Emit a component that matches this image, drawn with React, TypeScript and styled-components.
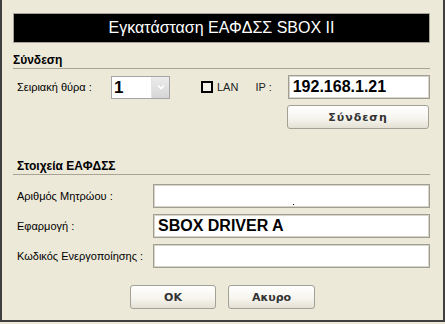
import React from 'react';
import styled, { createGlobalStyle } from 'styled-components';

const GlobalStyle = createGlobalStyle`
  html, body {
    margin: 0;
    padding: 0;
    background: #ece9d8;
  }
  * {
    box-sizing: border-box;
  }
`;

const Dialog = styled.div`
  width: 445px;
  height: 322px;
  background: #ece9d8;
  border-left: 2px solid #3f3f3f;
  border-right: 2px solid #3f3f3f;
  border-bottom: 2px solid #3f3f3f;
  padding: 13px 13px 0 11px;
  display: flex;
  flex-direction: column;
  font-family: 'Liberation Sans', Arial, sans-serif;
  font-size: 11px;
  color: #000;
`;

const TitleBar = styled.div`
  height: 30px;
  background: #000;
  border: 1px solid #a7a497;
  color: #fff;
  font-size: 16px;
  display: flex;
  align-items: center;
  justify-content: center;
`;

const SectionHeader = styled.div<{ $top: number; $indent: number }>`
  margin-top: ${(p) => p.$top}px;
  padding: 0 0 1px ${(p) => p.$indent}px;
  border-bottom: 1px solid #a7a497;
  font-weight: bold;
  font-size: 12px;
  line-height: 14px;
`;

const Row = styled.div<{ $top: number }>`
  display: flex;
  align-items: center;
  margin-top: ${(p) => p.$top}px;
`;

const Label = styled.span<{ $width: number }>`
  width: ${(p) => p.$width}px;
  padding-left: 4px;
  flex-shrink: 0;
`;

const Combo = styled.div`
  width: 59px;
  height: 23px;
  border: 1px solid #a5a5a5;
  background: #fff;
  display: flex;
`;

const ComboText = styled.span`
  flex: 1;
  font-size: 17px;
  font-weight: bold;
  line-height: 21px;
  padding-left: 2px;
`;

const ComboButton = styled.span`
  width: 18px;
  background: linear-gradient(#ececec, #d6d6d6);
  border-left: 1px solid #e4e4e4;
  display: flex;
  align-items: center;
  justify-content: center;
`;

const CheckBox = styled.span`
  width: 12px;
  height: 12px;
  border: 2px solid #000;
  margin-left: 31px;
  background: #f4f2e8;
`;

const SmallText = styled.span<{ $left: number }>`
  margin-left: ${(p) => p.$left}px;
  color: #222;
`;

const TextBox = styled.div<{ $width?: number }>`
  height: 24px;
  ${(p) => (p.$width ? `width: ${p.$width}px;` : 'flex: 1;')}
  background: #fff;
  border: 1px solid #a09e94;
  box-shadow: inset 0 0 0 1px #d8d5c8;
  font-size: 16px;
  font-weight: bold;
  line-height: 22px;
  padding-left: 4px;
  position: relative;
`;

const Dot = styled.span`
  position: absolute;
  left: 139px;
  top: 19px;
  width: 1px;
  height: 1px;
  background: #000;
`;

const PushButton = styled.button<{ $width: number }>`
  width: ${(p) => p.$width}px;
  height: 24px;
  border: 1px solid #a3a196;
  border-radius: 3px;
  background: linear-gradient(#ffffff 0%, #f6f5ef 55%, #e4e1d4 100%);
  font-family: 'DejaVu Sans', Verdana, sans-serif;
  font-weight: bold;
  font-size: 11px;
  color: #333;
  padding: 0;
`;

const ConnectRow = styled.div`
  display: flex;
  justify-content: flex-end;
  margin-top: 6px;
  padding-right: 1px;
`;

const Footer = styled.div`
  display: flex;
  justify-content: center;
  gap: 12px;
  margin-top: 17px;
  padding-left: 2px;
`;

const Chevron = () => (
  <svg width="8" height="6" viewBox="0 0 8 6">
    <path d="M1 1.5 L4 4.5 L7 1.5" fill="none" stroke="#ffffff" strokeWidth="1.6" />
  </svg>
);

export default function App() {
  return (
    <>
      <GlobalStyle />
      <Dialog>
        <TitleBar>Εγκατάσταση ΕΑΦΔΣΣ SBOX II</TitleBar>

        <SectionHeader $top={10} $indent={0}>Σύνδεση</SectionHeader>
        <Row $top={6}>
          <Label $width={98}>Σειριακή θύρα :</Label>
          <Combo>
            <ComboText>1</ComboText>
            <ComboButton>
              <Chevron />
            </ComboButton>
          </Combo>
          <CheckBox />
          <SmallText $left={4}>LAN</SmallText>
          <SmallText $left={17}>IP :</SmallText>
          <TextBox $width={142} style={{ marginLeft: 16 }}>192.168.1.21</TextBox>
        </Row>
        <ConnectRow>
          <PushButton $width={142} style={{ letterSpacing: '1px' }}>Σύνδεση</PushButton>
        </ConnectRow>

        <SectionHeader $top={30} $indent={4}>Στοιχεία ΕΑΦΔΣΣ</SectionHeader>
        <Row $top={9}>
          <Label $width={140}>Αριθμός Μητρώου :</Label>
          <TextBox>
            <Dot />
          </TextBox>
        </Row>
        <Row $top={6}>
          <Label $width={140}>Εφαρμογή :</Label>
          <TextBox>SBOX DRIVER A</TextBox>
        </Row>
        <Row $top={6}>
          <Label $width={140}>Κωδικός Ενεργοποίησης :</Label>
          <TextBox />
        </Row>

        <Footer>
          <PushButton $width={86}>OK</PushButton>
          <PushButton $width={87}>Ακυρο</PushButton>
        </Footer>
      </Dialog>
    </>
  );
}
